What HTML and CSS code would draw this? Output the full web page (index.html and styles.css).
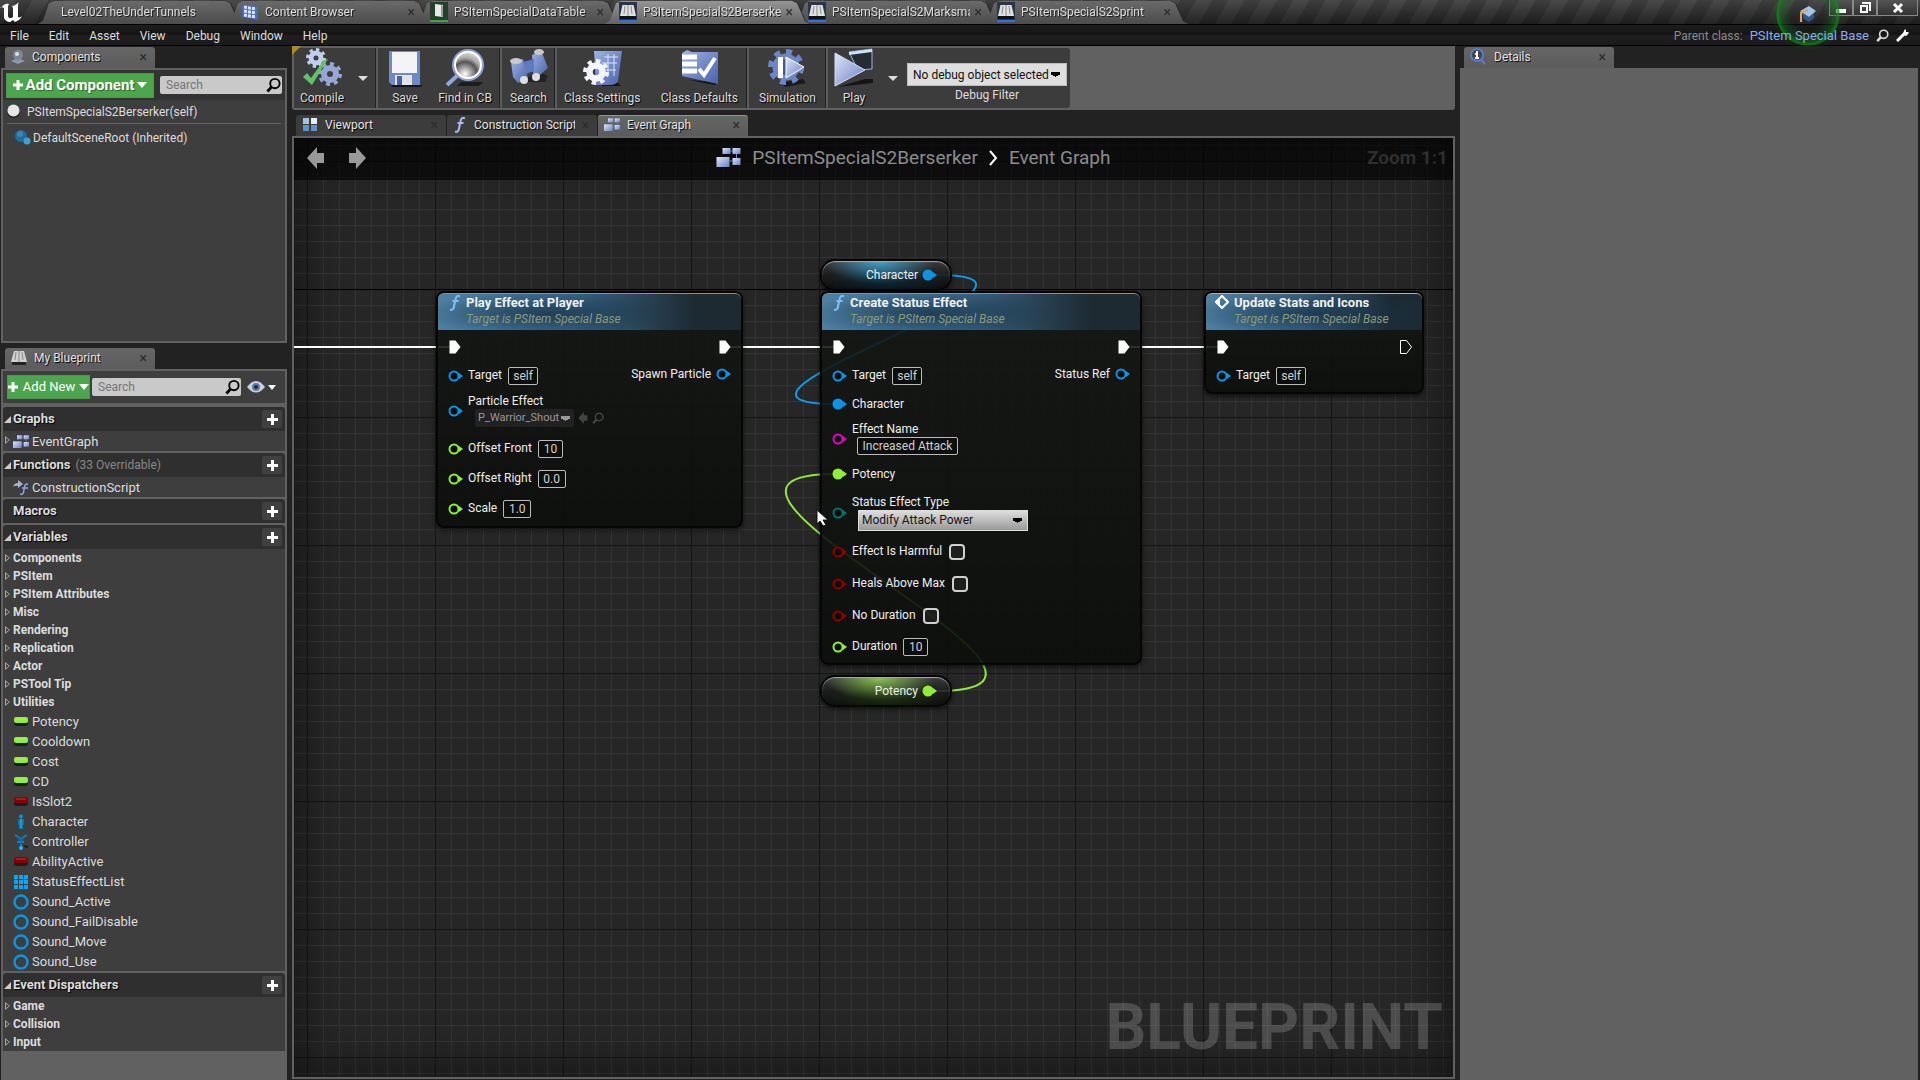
FILE: index.html
```html
<!DOCTYPE html>
<html lang="en">
<head>
<meta charset="utf-8">
<title>PSItemSpecialS2Berserker</title>
<link rel="stylesheet" href="styles.css">
</head>
<body>
<svg class="sprite" aria-hidden="true">
  <defs>
    <linearGradient id="g-blue" x1="0" y1="0" x2="1" y2="1"><stop offset="0" stop-color="#dfe7fb"/><stop offset="1" stop-color="#6a7fc2"/></linearGradient>
    <linearGradient id="g-deep" x1="0" y1="0" x2="1" y2="1"><stop offset="0" stop-color="#9fb4e6"/><stop offset="1" stop-color="#4a62a8"/></linearGradient>
    <radialGradient id="g-lens" cx=".4" cy=".8" r=".9"><stop offset="0" stop-color="#fff"/><stop offset=".45" stop-color="#555"/><stop offset=".6" stop-color="#aaa"/><stop offset="1" stop-color="#fff"/></radialGradient>
  </defs>
  <symbol id="i-gear" viewBox="0 0 24 24"><circle cx="12" cy="12" r="6" fill="none" stroke="currentColor" stroke-width="6"/><circle cx="12" cy="12" r="10" fill="none" stroke="currentColor" stroke-width="4" pathLength="16" stroke-dasharray="1"/></symbol>
  <symbol id="i-search" viewBox="0 0 16 16"><circle cx="9.500" cy="6.500" r="5" fill="none" stroke="currentColor" stroke-width="2"/><path d="M6 10L1.500 15" stroke="currentColor" stroke-width="3"/></symbol>
  <symbol id="i-nodes" viewBox="0 0 24 20"><g fill="url(#g-blue)"><rect x="6" y="0" width="8" height="6"/><rect x="16" y="0" width="8" height="6"/><rect x="16" y="10" width="8" height="7"/><rect x="0" y="9" width="13" height="10"/></g><path d="M14 3h2M20 6v4M13 13h3" stroke="#7a8cc4"/></symbol>
  <symbol id="i-f" viewBox="0 0 12 16"><path d="M11 1.500C8.500 0 7 1.500 6.500 4.500L5 11.500C4.500 14.500 3 15.500 1 14.300M3.500 6h6" fill="none" stroke="currentColor" stroke-width="2"/></symbol>
  <symbol id="i-book" viewBox="0 0 18 20"><rect width="18" height="20" fill="#2a344c"/><rect y="18" width="18" height="2" fill="#2f6fe8"/><path d="M1 14h16v3H1z" fill="#111"/><path d="M3.500 3h11L17 14H1z" fill="#e0e0e0"/><path d="M9 3v11M6 4L5 12M12 4l1 8" stroke="#8a8a8a"/></symbol>
  <symbol id="i-out" viewBox="0 0 12 14"><path d="M0.500 0.500h6l5 6.500-5 6.500h-6z"/></symbol>
  <symbol id="i-pin" viewBox="0 0 16 12"><circle cx="6" cy="6" r="4.500" fill="var(--fill,#080c0a)" stroke="currentColor" stroke-width="2"/><path d="M11 3l4 3-4 3z" fill="currentColor"/></symbol>
  <symbol id="i-pill" viewBox="0 0 14 9"><rect y="2" width="14" height="7" rx="3" fill="#1c1c1c"/><rect width="14" height="6" rx="2" fill="currentColor"/><path d="M2 2h10" stroke="#fff" opacity=".25"/></symbol>
  <symbol id="i-ring" viewBox="0 0 16 16"><circle cx="8" cy="8" r="6.500" fill="none" stroke="#0794e4" stroke-width="2.500"/></symbol>
  <symbol id="i-arrow" viewBox="0 0 17 22"><path d="M0 11L10 0v6h7v10h-7v6z" fill="currentColor"/></symbol>
</svg>

<header class="titlebar">
  <svg class="logo" viewBox="0 0 24 24"><path d="M1 8C3 4 7 3 9 4L8 6v10c0 2 3 3 5 1V8l-1-2c2 0 5-2 7-4-1 2-1 3-1 4v11c1 1 3 0 4-1-1 3-4 5-7 6l-2-2-3 2c-3 0-5-2-6-4V8c-1-1-3-1-4 0z" fill="#fff"/></svg>
  <nav class="doc-tabs">
    <div class="doc-tab first"><a href="#level">Level02TheUnderTunnels</a></div>
    <div class="doc-tab"><a href="#content"><svg width="18" height="18" viewBox="0 0 18 18"><path d="M1 1l16 2v14L1 14z" fill="#4a66b4"/><path d="M3 4l12 2M3 8l12 2M3 12l12 2" stroke="#dce6ff" stroke-width="3" stroke-dasharray="3 1"/></svg>Content Browser</a><button class="x">×</button></div>
    <div class="doc-tab"><a href="#table"><svg width="18" height="20" viewBox="0 0 18 20"><rect width="18" height="20" fill="#22402a"/><rect y="18" width="18" height="2" fill="#3fa34a"/><path d="M5 2l8 1v12l-8-1z" fill="#e8e8e8"/><path d="M11 3l2 1v11l-2-1z" fill="#999"/></svg>PSItemSpecialDataTable</a><button class="x">×</button></div>
    <div class="doc-tab active"><a href="#berserker"><svg width="18" height="20"><use href="#i-book"/></svg><span>PSItemSpecialS2Berserker</span></a><button class="x">×</button></div>
    <div class="doc-tab"><a href="#marksman"><svg width="18" height="20"><use href="#i-book"/></svg><span>PSItemSpecialS2Marksman</span></a><button class="x">×</button></div>
    <div class="doc-tab"><a href="#sprint"><svg width="18" height="20"><use href="#i-book"/></svg>PSItemSpecialS2Sprint</a><button class="x">×</button></div>
  </nav>
  <div class="tutorial">
    <svg width="18" height="18" viewBox="0 0 18 18"><path d="M4 8l6 4 5-4v5l-5 4-6-4z" fill="#345a86"/><path d="M1 6l9-5 7 5-7 6z" fill="#a9c4ea"/><path d="M9 5L2 8v9" stroke="#d6a868" stroke-width="2" fill="none"/></svg>
  </div>
  <div class="win-buttons">
    <button aria-label="Minimize"><svg width="12" height="12"><rect x="1" y="7" width="10" height="4" fill="#fff"/></svg></button>
    <button aria-label="Restore"><svg width="12" height="12"><path d="M4 2V1h7v7h-1" fill="none" stroke="#fff" stroke-width="2"/><rect x="2" y="4" width="6" height="6" fill="none" stroke="#fff" stroke-width="2"/></svg></button>
    <button class="wide" aria-label="Close"><svg width="12" height="12"><path d="M2 2l8 8M10 2l-8 8" stroke="#fff" stroke-width="3"/></svg></button>
  </div>
</header>

<div class="menubar">
  <nav class="menus"><a href="#file">File</a><a href="#edit">Edit</a><a href="#asset">Asset</a><a href="#view">View</a><a href="#debug">Debug</a><a href="#window">Window</a><a href="#help">Help</a></nav>
  <div class="parent-class"><span>Parent class:</span><a href="#base">PSItem Special Base</a>
    <svg width="13" height="13"><use href="#i-search"/></svg>
    <svg width="13" height="13" viewBox="0 0 13 13"><path d="M1 12L8 5" stroke="#fff" stroke-width="3"/><path d="M7 4l2-4 1 1v2l2 0 1 1-3 3-3-1z" fill="#fff"/></svg>
  </div>
</div>

<main class="workspace">
  <aside class="side">
    <div class="panel-tabs"><div class="panel-tab"><svg width="14" height="16" viewBox="0 0 14 16"><path d="M0 12l7-3 7 3-7 3z" fill="#8a9ab0"/><circle cx="7" cy="6" r="5" fill="#7d8896"/><circle cx="6" cy="5" r="2" fill="#d8e0ea"/></svg><span>Components</span><button class="x">×</button></div></div>
    <section class="panel components">
      <div class="panel-tools">
        <button class="green big"><svg width="10" height="10"><path d="M5 0v10M0 5h10" stroke="#fff" stroke-width="3"/></svg>Add Component<i class="caret"></i></button>
        <label class="search"><input type="text" placeholder="Search" aria-label="Search components"><svg width="15" height="16"><use href="#i-search"/></svg></label>
      </div>
      <div class="tree-root"><svg width="13" height="15" viewBox="0 0 13 15"><ellipse cx="6.500" cy="9" rx="6" ry="5" fill="#222"/><circle cx="6.500" cy="6.500" r="6" fill="#e6e6e6"/></svg>PSItemSpecialS2Berserker(self)</div>
      <div class="tree-child"><svg width="16" height="15" viewBox="0 0 16 15"><circle cx="6" cy="6" r="6" fill="#1f6d9c"/><circle cx="5" cy="4" r="3" fill="#3a86b4"/><circle cx="12" cy="11" r="3.500" fill="#3ea0d4"/></svg>DefaultSceneRoot (Inherited)</div>
    </section>
    <div class="panel-tabs lower"><div class="panel-tab"><svg width="16" height="15" viewBox="0 0 16 15"><path d="M1 11h14v4H1z" fill="#222"/><path d="M3 1h10l3 11H0z" fill="#d0d0d0"/><path d="M8 1v11M5 2L4 10M11 2l1 8" stroke="#888"/></svg><span>My Blueprint</span><button class="x">×</button></div></div>
    <section class="panel blueprint">
      <div class="panel-tools">
        <button class="green"><svg width="11" height="11"><path d="M5 0v10M0 5h10" stroke="#fff" stroke-width="3"/></svg>Add New<i class="caret"></i></button>
        <label class="search"><input type="text" placeholder="Search" aria-label="Search blueprint"><svg width="15" height="16"><use href="#i-search"/></svg></label>
        <button class="eye" aria-label="View options"><svg width="18" height="12" viewBox="0 0 18 12"><path d="M0 6q9-12 18 0q-9 11-18 0z" fill="#ccd2dc"/><circle cx="9" cy="6" r="4" fill="#5d7da8"/><circle cx="9" cy="6" r="2" fill="#1d2c44"/></svg><i class="caret"></i></button>
      </div>
      <div class="sections">
        <section><h3 class="open">Graphs<button aria-label="Add graph"></button></h3>
          <ul class="items"><li class="closed"><svg width="16" height="14"><use href="#i-nodes"/></svg>EventGraph</li></ul></section>
        <section><h3 class="open">Functions <small>(33 Overridable)</small><button aria-label="Add function"></button></h3>
          <ul class="items"><li><svg width="16" height="16" viewBox="0 0 16 16"><path d="M0 7q1-4 5-4V0l5 4-5 4V6Q2 5 0 7z" fill="#aab4cc"/><path d="M15 4.500c-2-1-3 0-3.500 2.500L10.500 12c-.5 2-1.500 3-3.500 2M9 8h6" fill="none" stroke="#8ea6e0" stroke-width="1.500"/></svg>ConstructionScript</li></ul></section>
        <section><h3>Macros<button aria-label="Add macro"></button></h3></section>
        <section><h3 class="open">Variables<button aria-label="Add variable"></button></h3>
          <ul class="cats"><li>Components</li><li>PSItem</li><li>PSItem Attributes</li><li>Misc</li><li>Rendering</li><li>Replication</li><li>Actor</li><li>PSTool Tip</li><li>Utilities</li></ul>
          <ul class="items">
            <li><svg class="lime" width="16" height="9"><use href="#i-pill"/></svg>Potency</li>
            <li><svg class="lime" width="16" height="9"><use href="#i-pill"/></svg>Cooldown</li>
            <li><svg class="lime" width="16" height="9"><use href="#i-pill"/></svg>Cost</li>
            <li><svg class="lime" width="16" height="9"><use href="#i-pill"/></svg>CD</li>
            <li><svg class="red" width="16" height="9"><use href="#i-pill"/></svg>IsSlot2</li>
            <li><svg width="16" height="16" viewBox="0 0 16 16"><circle cx="8" cy="2.500" r="2" fill="#0794e4"/><path d="M5 5h6v6h-1v4H6v-4H5z" fill="#0b76b4"/><path d="M8 5v9" stroke="#3cb8ff"/></svg>Character</li>
            <li><svg width="16" height="16" viewBox="0 0 16 16"><path d="M2 1l5 3h2l5-3M4 8h7M8 10v3" fill="none" stroke="#0b80c4" stroke-width="2"/><circle cx="8" cy="5.500" r="2.500" fill="#0a6ca4"/><circle cx="8" cy="14" r="2" fill="#2cb0ff"/><path d="M11 12l4 1" stroke="#1c1c1c" stroke-width="2"/></svg>Controller</li>
            <li><svg class="red" width="16" height="9"><use href="#i-pill"/></svg>AbilityActive</li>
            <li><svg width="16" height="14" viewBox="0 0 16 14"><path d="M1 2h14M1 7h14M1 12h14" stroke="#04a6ff" stroke-width="4" stroke-dasharray="4 1"/></svg>StatusEffectList</li>
            <li><svg width="16" height="16"><use href="#i-ring"/></svg>Sound_Active</li>
            <li><svg width="16" height="16"><use href="#i-ring"/></svg>Sound_FailDisable</li>
            <li><svg width="16" height="16"><use href="#i-ring"/></svg>Sound_Move</li>
            <li><svg width="16" height="16"><use href="#i-ring"/></svg>Sound_Use</li>
          </ul></section>
        <section><h3 class="open">Event Dispatchers<button aria-label="Add dispatcher"></button></h3>
          <ul class="cats"><li>Game</li><li>Collision</li><li>Input</li></ul></section>
      </div>
    </section>
  </aside>

  <div class="center">
    <div class="toolbar">
      <div class="group compile">
        <button><svg viewBox="0 0 40 40"><use href="#i-gear" x="4" y="0" width="20" height="20" color="#c3cdec"/><use href="#i-gear" x="16" y="14" width="24" height="24" color="#98a6d4"/><path d="M1 29l4-4 4 5L22 12l4-1L10 37z" fill="#62c26a"/></svg>Compile</button>
        <button class="drop" aria-label="Compile options"><i class="caret"></i></button>
      </div>
      <div class="group save">
        <button><svg viewBox="0 0 40 40"><path d="M6 37h32l-3 2H8z" fill="#151515"/><path d="M4 3h31v34H7l-3-3z" fill="#6f88c8"/><rect x="7" y="4" width="25" height="21" fill="#f4f4f6"/><rect x="10" y="27" width="17" height="10" fill="#e4e4e8"/><rect x="12" y="28" width="5" height="9" fill="#4a62a4"/></svg>Save</button>
        <button><svg viewBox="0 0 40 40"><path d="M16 34h22l-4 4H12z" fill="#1c1c1c"/><path d="M14 26L2 37" stroke="#8fa6e0" stroke-width="4"/><circle cx="23" cy="17" r="15" fill="url(#g-lens)" stroke="#8ea2d8" stroke-width="2"/><circle cx="23" cy="17" r="13" fill="none" stroke="#fff" stroke-width="2"/></svg>Find in CB</button>
      </div>
      <div class="group find">
        <button><svg viewBox="0 0 40 40"><path d="M8 34h28l3-6-8-4z" fill="#222"/><path d="M2 14l12-3 5 19-10 5-5-6z" fill="url(#g-deep)"/><path d="M23 7l9-5 7 18-9 8-6-3z" fill="url(#g-deep)"/><path d="M14 14l11-3v12l-8 3z" fill="#5f7ac0"/><ellipse cx="7" cy="13" rx="6" ry="3" fill="#c9c9c9"/><ellipse cx="30" cy="4" rx="5" ry="3" fill="#c9c9c9"/><circle cx="15" cy="32" r="4" fill="#ddd"/><circle cx="27" cy="29" r="4" fill="#ddd"/></svg>Search</button>
      </div>
      <div class="group class">
        <button><svg viewBox="0 0 40 40"><path d="M20 36l16-1 3 3H20z" fill="#151515"/><path d="M12 3h28l-4 30q-2 4-8 4H14z" fill="url(#g-deep)"/><path d="M22 9h14M20 15h15M21 22h13M26 6v22M32 6v22" stroke="#dbe5ff"/><use href="#i-gear" x="1" y="11" width="26" height="26" color="#f2f5fb"/></svg>Class Settings</button>
        <button><svg viewBox="0 0 40 40"><path d="M10 32l26 5 2-3z" fill="#151515"/><path d="M3 5l5-3 5 2h26v32L3 28z" fill="url(#g-deep)"/><path d="M3 9h15M3 16h15M3 23h15" stroke="#fff" stroke-width="5"/><path d="M20 21l5 6L36 10" fill="none" stroke="#fff" stroke-width="4"/></svg>Class Defaults</button>
      </div>
      <div class="group sim">
        <button><svg viewBox="0 0 40 40"><path d="M12 35l24-4 3 4-20 4z" fill="#1a1a1a"/><use href="#i-gear" x="1" y="1" width="36" height="36" color="#6c86c6"/><circle cx="19" cy="19" r="8" fill="#44598c"/><path d="M11 9h5v21h-5z" fill="#fff"/><path d="M19 9l18 10-18 11z" fill="url(#g-blue)" stroke="#fff"/></svg>Simulation</button>
      </div>
      <div class="group play">
        <button><svg viewBox="0 0 40 40"><path d="M3 39l28-8 8 0v4z" fill="#151515"/><path d="M15 4l23-3v20l-14 1z" fill="#262c36" stroke="#9db4d8"/><path d="M15 4l23-3v3L15 7z" fill="#cfe0f6"/><path d="M1 5l30 17L1 38z" fill="url(#g-blue)" stroke="#cfdcf4"/></svg>Play</button>
        <button class="drop" aria-label="Play options"><i class="caret"></i></button>
        <div class="debug"><select id="dbg"><option>No debug object selected</option></select><label for="dbg">Debug Filter</label></div>
      </div>
    </div>

    <div class="graph-tabs">
      <div class="panel-tab off"><svg width="16" height="15" viewBox="0 0 16 15"><path d="M1 1h6v6H1z" fill="#9fc4e8"/><path d="M9 1h6v6H9z" fill="#e4eefa"/><path d="M1 8h6v6H1zM9 8h6v6H9z" fill="#5b94cc"/></svg><span>Viewport</span><button class="x">×</button></div>
      <div class="panel-tab off"><svg class="fn" width="14" height="16"><use href="#i-f"/></svg><span>Construction Script</span><button class="x">×</button></div>
      <div class="panel-tab current"><svg width="16" height="14"><use href="#i-nodes"/></svg><span>Event Graph</span><button class="x">×</button></div>
    </div>

    <section class="graph">
      <div class="graph-head">
        <div class="history"><button aria-label="Back"><svg width="17" height="22"><use href="#i-arrow"/></svg></button><button class="fwd" aria-label="Forward"><svg width="17" height="22"><use href="#i-arrow"/></svg></button></div>
        <div class="crumbs"><svg width="25" height="20"><use href="#i-nodes"/></svg><a href="#bp">PSItemSpecialS2Berserker</a><svg width="9" height="16"><path d="M1 1l6 7-6 7" fill="none" stroke="#fff" stroke-width="2"/></svg><a href="#eg">Event Graph</a></div>
        <div class="zoom">Zoom 1:1</div>
      </div>
      <div class="watermark">BLUEPRINT</div>
      <svg class="wires" width="1159" height="939" viewBox="294 138 1159 939">
        <path d="M294 347H450M730 347H834M1128 347H1218" stroke="#fff" stroke-width="2"/>
        <path d="M936 275C1107 275 665 404 836 404" stroke="#0d9ae8" stroke-width="2"/>
        <path d="M936 691C1142 691 629 474 836 474" stroke="#8fe63c" stroke-width="2"/>
      </svg>

      <div class="var-node character">Character<svg class="pin blue full"><use href="#i-pin"/></svg></div>
      <div class="var-node potency">Potency<svg class="pin lime full"><use href="#i-pin"/></svg></div>

      <article class="node play-effect">
        <header><svg class="fn" width="12" height="16"><use href="#i-f"/></svg><div><h4>Play Effect at Player</h4><p>Target is PSItem Special Base</p></div></header>
        <div class="pins">
          <div class="in">
            <div class="row exec"><svg class="arrow"><use href="#i-out"/></svg></div>
            <div class="row h24"><svg class="pin blue"><use href="#i-pin"/></svg><label for="a1">Target</label><input id="a1" class="w30" value="self"></div>
            <div class="row h46"><svg class="pin blue"><use href="#i-pin"/></svg><div class="stack"><label for="a2">Particle Effect</label><div class="asset"><select id="a2"><option>P_Warrior_Shout</option></select><svg width="12" height="12" viewBox="0 0 17 22"><use href="#i-arrow"/></svg><svg width="12" height="12"><use href="#i-search"/></svg></div></div></div>
            <div class="row h30"><svg class="pin lime"><use href="#i-pin"/></svg><label for="a3">Offset Front</label><input id="a3" class="w25" value="10"></div>
            <div class="row h30"><svg class="pin lime"><use href="#i-pin"/></svg><label for="a4">Offset Right</label><input id="a4" class="w28" value="0.0"></div>
            <div class="row h30"><svg class="pin lime"><use href="#i-pin"/></svg><label for="a5">Scale</label><input id="a5" class="w28" value="1.0"></div>
          </div>
          <div class="out"><div class="row exec"><svg class="arrow"><use href="#i-out"/></svg></div><div class="row h20">Spawn Particle<svg class="pin blue"><use href="#i-pin"/></svg></div></div>
        </div>
      </article>

      <article class="node create-status">
        <header><svg class="fn" width="12" height="16"><use href="#i-f"/></svg><div><h4>Create Status Effect</h4><p>Target is PSItem Special Base</p></div></header>
        <div class="pins">
          <div class="in">
            <div class="row exec"><svg class="arrow"><use href="#i-out"/></svg></div>
            <div class="row h24"><svg class="pin blue"><use href="#i-pin"/></svg><label for="b1">Target</label><input id="b1" class="w30" value="self"></div>
            <div class="row h32"><svg class="pin blue full"><use href="#i-pin"/></svg><span>Character</span></div>
            <div class="row h38"><svg class="pin pink"><use href="#i-pin"/></svg><div class="stack"><label for="b2">Effect Name</label><input id="b2" class="w101" value="Increased Attack"></div></div>
            <div class="row h32"><svg class="pin lime full"><use href="#i-pin"/></svg><span>Potency</span></div>
            <div class="row h46"><svg class="pin teal"><use href="#i-pin"/></svg><div class="stack"><label for="b3">Status Effect Type</label><select id="b3" class="combo"><option>Modify Attack Power</option></select></div></div>
            <div class="row h32"><svg class="pin red"><use href="#i-pin"/></svg><label for="b4">Effect Is Harmful</label><input id="b4" type="checkbox"></div>
            <div class="row h32"><svg class="pin red"><use href="#i-pin"/></svg><label for="b5">Heals Above Max</label><input id="b5" type="checkbox"></div>
            <div class="row h32"><svg class="pin red"><use href="#i-pin"/></svg><label for="b6">No Duration</label><input id="b6" type="checkbox"></div>
            <div class="row h30"><svg class="pin lime"><use href="#i-pin"/></svg><label for="b7">Duration</label><input id="b7" class="w25" value="10"></div>
          </div>
          <div class="out"><div class="row exec"><svg class="arrow"><use href="#i-out"/></svg></div><div class="row h20">Status Ref<svg class="pin blue"><use href="#i-pin"/></svg></div></div>
        </div>
      </article>

      <article class="node update-stats">
        <header><svg width="14" height="14" viewBox="0 0 14 14"><path d="M7 1l6 6-6 6-6-6z" fill="none" stroke="#fff" stroke-width="2"/><path d="M0 7l5-5v10z" fill="#fff"/></svg><div><h4>Update Stats and Icons</h4><p>Target is PSItem Special Base</p></div></header>
        <div class="pins">
          <div class="in"><div class="row exec"><svg class="arrow"><use href="#i-out"/></svg></div><div class="row h24"><svg class="pin blue"><use href="#i-pin"/></svg><label for="c1">Target</label><input id="c1" class="w30" value="self"></div></div>
          <div class="out"><div class="row exec"><svg class="arrow hollow"><use href="#i-out"/></svg></div></div>
        </div>
      </article>

      <svg class="cursor" width="13" height="18" viewBox="0 0 13 18"><path d="M1 1v14l3-3 3 5 3-1-3-5h5z" fill="#fff" stroke="#111"/></svg>
    </section>
  </div>

  <aside class="details">
    <div class="panel-tabs"><div class="panel-tab"><svg width="17" height="17" viewBox="0 0 17 17"><path d="M10 11l5 5" stroke="#5a7ad0" stroke-width="2"/><circle cx="7" cy="7" r="6" fill="#444" stroke="#5a7ad0" stroke-width="2"/><path d="M7 3v2M5 6h2v4M5 10h4" stroke="#fff" stroke-width="2"/></svg><span>Details</span><button class="x">×</button></div></div>
    <section class="panel empty"></section>
  </aside>
</main>
</body>
</html>
```
FILE: styles.css
```css
* { box-sizing: border-box; }
html, body { height: 100%; }
body { margin: 0; display: flex; flex-direction: column; background: #222; color: #dcdcdc; font: 12px/16px Roboto, "Liberation Sans", sans-serif; overflow: hidden; }
button, input, select { font: inherit; color: inherit; margin: 0; padding: 0; border: 0; background: none; appearance: none; border-radius: 0; }
a { color: inherit; text-decoration: none; }
ul, h3, h4, p { margin: 0; padding: 0; list-style: none; font-size: inherit; }
svg { flex: none; display: block; }
.sprite { position: absolute; width: 0; height: 0; }
.caret { display: inline-block; flex: none; border: 5px solid transparent; border-top: 6px solid currentColor; border-bottom: 0; }
.x { color: #2c2c2c; font-size: 14px; line-height: 16px; margin-left: auto; }

/* title bar */
.titlebar { flex: none; height: 25px; display: flex; background: repeating-linear-gradient(120deg, #3c3c3c 0 14px, #303030 14px 28px); border-bottom: 1px solid #000; position: relative; }
.titlebar::before { content: ""; position: absolute; inset: 0; background: linear-gradient(#fff1, #0006); }
.logo { width: 24px; height: 24px; position: relative; }
.doc-tabs { display: flex; position: relative; padding-left: 14px; }
.doc-tab { position: relative; z-index: 0; width: 205px; height: 24px; margin-right: -16px; padding: 0 17px 0 14px; display: flex; align-items: center; color: #ddd; text-shadow: 1px 1px 0 #222; filter: drop-shadow(1px 0 0 #2a2a2a); }
.doc-tab::before { content: ""; position: absolute; z-index: -1; inset: 1px 0 0; background: linear-gradient(#6a6a6a, #4c4c4c); clip-path: polygon(0 100%, 5px 85%, 11px 10%, 16px 0, calc(100% - 18px) 0, calc(100% - 13px) 10%, calc(100% - 5px) 88%, 100% 100%); }
.doc-tab.active { z-index: 2; }
.doc-tab.active::before { background: linear-gradient(#959595, #636363); }
.doc-tab.first { padding-left: 23px; }
.doc-tab a { display: flex; align-items: center; gap: 6px; min-width: 0; }
.doc-tab a span { overflow: hidden; white-space: nowrap; width: 138px; }
.tutorial { position: absolute; z-index: 3; right: 80px; top: -18px; width: 64px; height: 64px; border-radius: 50%; display: grid; place-items: center; background: radial-gradient(circle, #0000 35%, #0f7a1866 60%, #0f8a18cc 68%, #0f7a1822 71%, #0000 74%); box-shadow: 0 0 0 4px #0f7a1818; }
.win-buttons { position: relative; margin-left: auto; display: flex; padding-right: 2px; height: 16px; }
.win-buttons button { width: 24px; display: grid; place-items: center; background: linear-gradient(#555, #333); border: 1px solid #888; border-top: 0; }
.win-buttons .wide { width: 41px; }

/* menu bar */
.menubar { flex: none; height: 21px; display: flex; justify-content: space-between; align-items: center; padding: 1px 11px 0 10px; background: linear-gradient(#1d1d1d, #141414 45%, #1f1f1f 55%, #1a1a1a); border-bottom: 1px solid #000; }
.menus { display: flex; gap: 20px; }
.parent-class { display: flex; align-items: center; gap: 7px; color: #8a8a8a; }
.parent-class a { color: #84b0f0; position: relative; z-index: 4; font-size: 13px; }
.parent-class svg { color: #ddd; }

/* layout */
.workspace { flex: 1; min-height: 0; display: grid; grid-template-columns: 286px minmax(0, 1fr) 458px; gap: 5px; padding: 0 2px 0 1px; }
.side, .center, .details { display: flex; flex-direction: column; min-width: 0; min-height: 0; }
.side, .details { padding-top: 1px; }
.center { padding-bottom: 1px; }
.panel-tabs { padding-left: 4px; display: flex; }
.panel-tabs.lower { margin-top: 5px; }
.panel-tab { width: 150px; height: 21px; display: flex; align-items: center; padding: 0 8px 2px 6px; gap: 7px; background: linear-gradient(#666, #5c5c5c); border-radius: 3px 3px 0 0; color: #e4e4e4; text-shadow: 1px 1px 1px #000; }
.panel-tab span { white-space: nowrap; overflow: hidden; }
.panel-tab .x { text-shadow: none; }
.panel-tab.off { background: #3c3c3c; }
.panel-tab.current { border-top: 1px solid #b49a2a; }
.fn { color: #7cc0f8; }
.panel-tab .fn { color: #a8bcf0; }
.panel { background: #3e3e3e; border: 2px solid #616161; }
.components { height: 275px; flex: none; }
.empty { flex: 1; background: #616161; }
.panel-tools { display: flex; align-items: center; background: #333; }
.components .panel-tools { height: 30px; padding: 0 3px; gap: 6px; }
.green { display: flex; align-items: center; gap: 4px; background: #4da64d; color: #fff; border: 1px solid #479a47; height: 24px; width: 83px; justify-content: center; white-space: nowrap; font-size: 13px; }
.green.big { width: 148px; height: 25px; font-size: 15px; font-weight: bold; gap: 3px; text-shadow: 1px 1px 1px #0006; }
.search { flex: 1; min-width: 0; display: flex; align-items: center; height: 18px; background: #c9c9c9; border-radius: 2px; color: #000; padding: 0 1px 0 6px; }
.search input { flex: 1; min-width: 0; width: 0; }
.search input::placeholder { color: #777; opacity: 1; }
.tree-root { display: flex; align-items: center; gap: 7px; height: 24px; margin: 0 4px; border-bottom: 1px solid #666; }
.tree-child { display: flex; align-items: center; gap: 2px; height: 27px; margin-left: 12px; }

.blueprint { flex: 1; min-height: 0; background: #616161; }
.blueprint .panel-tools { height: 32px; padding: 0 4px; gap: 2px; background: #3e3e3e; }
.eye { display: flex; align-items: center; gap: 3px; width: 38px; padding-left: 4px; }
.eye .caret { border-width: 5px 4px 0; border-top-color: #fff; }
.sections { display: flex; flex-direction: column; gap: 2px; margin-top: 4px; font-size: 13px; }
.sections h3 { position: relative; display: flex; align-items: center; height: 24px; padding: 0 3px 0 10px; background: #2f2f2f; border-radius: 3px 3px 0 0; text-shadow: 1px 1px 1px #000; font-weight: bold; }
.sections h3.open::before { content: ""; position: absolute; left: 1px; border: solid transparent; border-width: 0 0 7px 7px; border-bottom-color: #ccc; }
.sections small { font-size: 12px; font-weight: normal; color: #888; margin-left: 5px; text-shadow: none; }
.sections h3 button { margin-left: auto; width: 20px; height: 18px; background: linear-gradient(#fff, #fff) center/11px 3px no-repeat, linear-gradient(#fff, #fff) center/3px 11px no-repeat, #404040; border-radius: 2px; }
.sections ul { background: #3e3e3e; }
.items li { position: relative; height: 20px; display: flex; align-items: center; gap: 3px; padding: 1px 0 0 10px; }
.cats li { position: relative; height: 18px; line-height: 18px; padding-left: 10px; font-weight: bold; font-size: 12px; }
.cats li::before, .items .closed::before { content: ""; position: absolute; left: 2px; top: 5px; width: 5px; height: 8px; background: #aaa; clip-path: polygon(0 0, 100% 50%, 0 100%, 0 0, 1px 2px, 1px 6px, 4px 50%, 1px 2px); }
.lime { color: #8fee38; }
.red { color: #8a0000; }
.blue { color: #0a94e6; }
.pink { color: #e400c4; }
.teal { color: #06706a; }

/* toolbar */
.toolbar { flex: none; height: 64px; display: flex; background: #616161; padding: 2px; border-radius: 0 0 3px 3px; position: relative; }
.toolbar::before { content: ""; position: absolute; left: 0; top: 0; border: solid transparent; border-width: 9px 9px 0 0; border-top-color: #b08a24; z-index: 1; }
.group { display: flex; background: #3c3c3c; border-right: 2px solid #5c5c5c; box-shadow: inset -1px 0 #222; }
.group button { display: flex; flex-direction: column; align-items: center; white-space: nowrap; text-shadow: 1px 1px 1px #000; }
.group button svg { width: 40px; height: 40px; margin-bottom: 2px; }
.compile { width: 84px; }
.compile button:first-child { width: 56px; }
.group .drop { width: 26px; justify-content: center; }
.drop .caret { border-width: 5px 5px 0; }
.save { width: 124px; }
.save button { width: 66px; }
.save button:first-child { width: 54px; }
.find { width: 55px; justify-content: center; }
.class { width: 192px; justify-content: space-between; padding: 0 9px 0 7px; }
.sim { width: 79px; justify-content: center; }
.play { width: 242px; border: 0; border-radius: 0 3px 3px 0; box-shadow: none; }
.play button:first-child { width: 52px; }
.debug { flex: 1; display: flex; flex-direction: column; align-items: center; padding: 15px 3px 0 1px; gap: 1px; }
.debug select, .asset select, .combo { background-repeat: no-repeat; }
.debug select { width: 100%; height: 23px; padding: 0 5px; border: 1px solid #bbb; color: #111; background-color: #dedede; background-image: conic-gradient(from -60deg at 50% 100%, #000 120deg, #0000 0); background-size: 9px 5px; background-position: right 6px center; }

/* graph */
.graph-tabs { flex: none; display: flex; gap: 1px; padding: 5px 0 0 4px; }
.graph { flex: 1; min-height: 0; position: relative; overflow: hidden; border: 2px solid #616161; background-color: #262626;
  background-image: linear-gradient(#000, #000), linear-gradient(90deg, #151515 1px, #0000 0), linear-gradient(#151515 1px, #0000 0), linear-gradient(90deg, #343434 1px, #0000 0), linear-gradient(#343434 1px, #0000 0);
  background-size: 100% 1px, 128px 128px, 128px 128px, 16px 16px, 16px 16px;
  background-position: 0 151px, 13px 0, 0 23px, 13px 0, 0 7px;
  background-repeat: no-repeat, repeat, repeat, repeat, repeat; }
.graph::before { content: ""; position: absolute; inset: 0; box-shadow: inset 0 0 50px #0008; }
.graph-head { position: relative; z-index: 1; height: 42px; background: #000000a0; display: flex; align-items: center; padding: 0 5px 2px 13px; font-size: 19px; line-height: 24px; }
.history { display: flex; gap: 25px; color: #999; }
.fwd svg { transform: scaleX(-1); }
.crumbs { flex: 1; display: flex; align-items: center; justify-content: center; gap: 11px; margin-left: 94px; color: #8c8c8c; }
.zoom { text-align: right; font-weight: bold; color: #2f2f2f; }
.watermark { position: absolute; right: 10px; bottom: 11px; font: bold 64px/76px "Liberation Sans Narrow", Roboto, sans-serif; color: #ffffff2e; }
.wires { position: absolute; left: 0; top: 0; fill: none; }

.node { position: absolute; top: 153px; border: 2px solid #060606; border-radius: 8px; background: linear-gradient(#141614e0, #0c0e0be8); box-shadow: 0 2px 5px #0009; color: #eee; }
.play-effect { left: 142px; width: 307px; height: 237px; }
.create-status { left: 526px; width: 322px; height: 374px; }
.update-stats { left: 910px; width: 220px; height: 103px; }
.node header { height: 37px; display: flex; gap: 5px; padding: 1px 0 0 11px; border-radius: 6px 6px 0 0; border-top: 1px solid #6a9ab8; background: radial-gradient(ellipse 130px 22px at 110px 20px, #16344acc, #0000), linear-gradient(90deg, #4e80a2, #3a6482 45%, #1d2a32 85%); }
.update-stats header { padding-left: 9px; border-top-color: #a8b4bc; }
.node h4 { font-size: 13px; line-height: 16px; color: #f0f0f0; }
.node p { font-style: italic; color: #8e9877; line-height: 17px; }
.pins { display: flex; justify-content: space-between; padding: 0 9px 0 10px; }
.row { display: flex; align-items: center; white-space: nowrap; }
.row label, .row > span { padding-bottom: 3px; margin-left: 4px; }
.row > span { padding-bottom: 0; }
.row > input { margin-left: 6px; }
.out .row { justify-content: flex-end; gap: 5px; }
.exec { height: 34px; padding: 0 1px; }
.h20 { height: 20px; }
.h24 { height: 24px; }
.h30 { height: 30px; }
.h32 { height: 32px; }
.h38 { height: 38px; }
.h46 { height: 46px; }
.arrow { width: 12px; height: 14px; fill: #fff; }
.arrow.hollow { fill: none; stroke: #fff; stroke-width: 1px; }
.pin { width: 16px; height: 12px; }
.pin.full { --fill: currentColor; }
.row input { height: 18px; padding: 0; text-align: center; border: 1px solid #bbb; border-radius: 2px; color: #d0d0d0; background: #0c0e0c; }
.w30 { width: 30px; }
.w25 { width: 25px; }
.w28 { width: 28px; }
.w101 { width: 101px; }
.row input[type=checkbox] { width: 16px; height: 16px; border: 2px solid #d0d0d0; border-radius: 4px; background: #2a2a2a80; margin-left: 7px; }
.stack { display: flex; flex-direction: column; align-items: flex-start; margin-left: 4px; padding-bottom: 2px; }
.stack label { margin: 0; padding: 0; }
.stack > input { margin-left: 5px; }
.asset { display: flex; align-items: center; gap: 3px; margin-left: 7px; color: #444; }
.asset select { width: 99px; height: 18px; padding-left: 3px; font-size: 11px; color: #999; background-color: #222; border-radius: 3px; background-image: conic-gradient(from -60deg at 50% 100%, #999 120deg, #0000 0); background-size: 9px 5px; background-position: right 4px center; }
.combo { width: 170px; height: 21px; margin-left: 6px; padding-left: 3px; color: #151515; border: 1px solid #ddd; background-image: conic-gradient(from -60deg at 50% 100%, #000 120deg, #0000 0), linear-gradient(#ddd, #999); background-size: 9px 5px, 100% 100%; background-position: right 5px center, 0 0; }

.var-node { position: absolute; left: 526px; width: 132px; height: 32px; border: 2px solid #060606; border-radius: 15px; display: flex; align-items: center; justify-content: flex-end; gap: 4px; padding-right: 12px; color: #eee; box-shadow: inset 0 1px 1px #aaa, 0 2px 4px #0009; }
.var-node.character { top: 121px; background: linear-gradient(#fff2, #0000 50%, #0008), radial-gradient(ellipse 55px 22px at 45% 5%, #2a90bc, #0000), radial-gradient(ellipse 60px 20px at 50% 90%, #0e3a50e0, #1a1c1ce0); }
.var-node.potency { top: 537px; background: linear-gradient(#fff2, #0000 50%, #0008), radial-gradient(ellipse 55px 22px at 45% 5%, #7cb840, #0000), radial-gradient(ellipse 60px 20px at 50% 90%, #2c4a16e0, #1a1c1ce0); }
.cursor { position: absolute; left: 522px; top: 371px; }
```
